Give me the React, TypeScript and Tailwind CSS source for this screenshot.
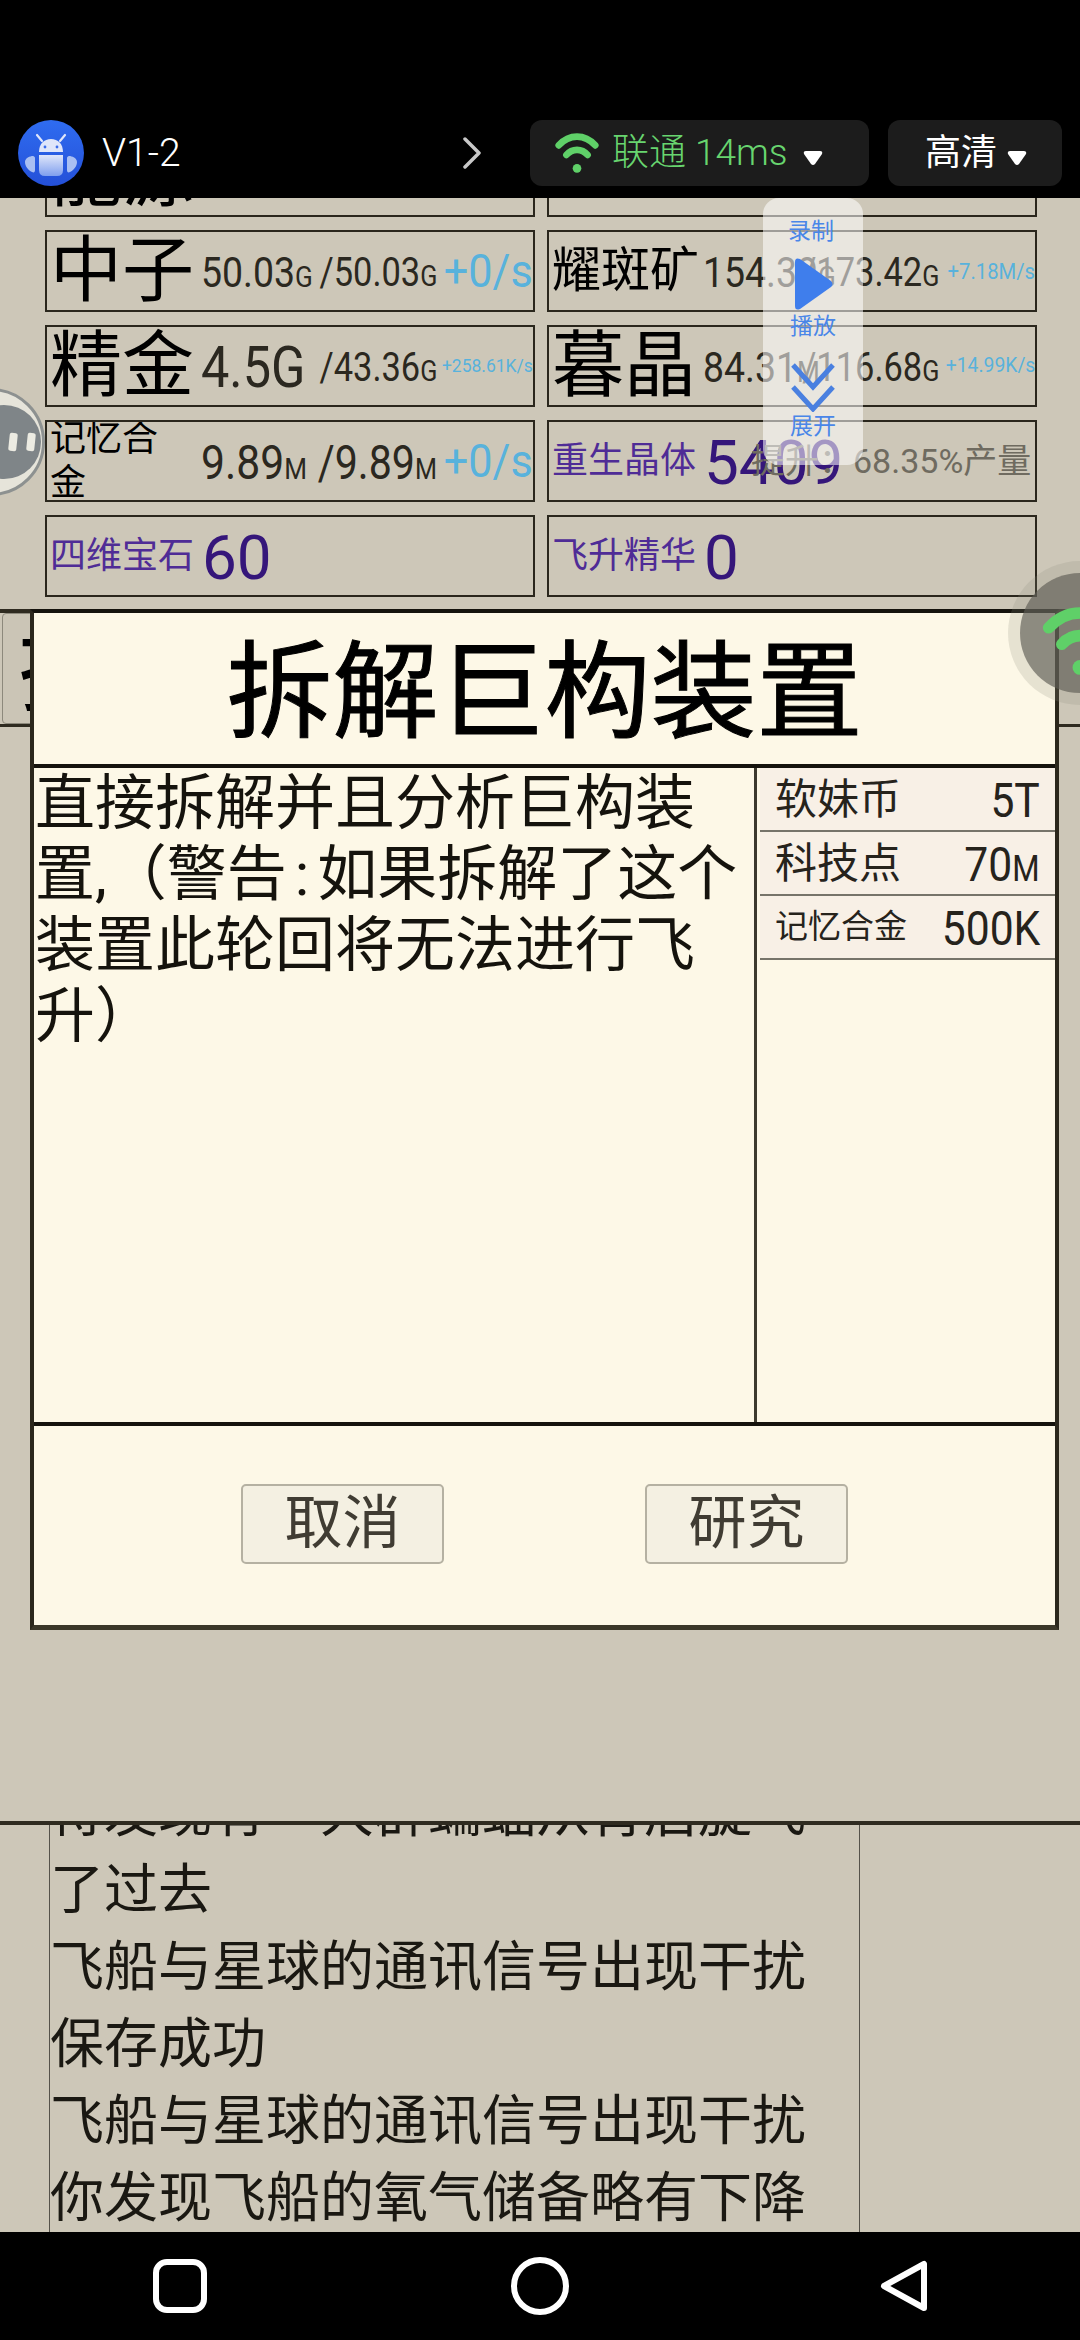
const Sub = ({ children, size = "text-[30px]" }: { children: React.ReactNode; size?: string }) => <span className={size}>{children}</span>;

type RowProps = { name: string; nameClass: string; value: React.ReactNode; valueClass?: string; max: React.ReactNode; rate: string; rateClass: string };

function Res({ name, nameClass, value, valueClass = "text-[43px]", max, rate, rateClass }: RowProps) {
  return (
    <div className="flex h-[82px] items-center overflow-hidden whitespace-nowrap border-2 border-[#2a261c]">
      <div className="w-[154px] shrink-0 pl-[3px]">
        <div className={nameClass}>{name}</div>
      </div>
      <div className="flex w-[117px] shrink-0 justify-start pt-[3px] text-[#2b2820]">
        <span className={`inline-block origin-left scale-x-[.87] ${valueClass}`}>{value}</span>
      </div>
      <div className="flex w-[119px] shrink-0 justify-end pt-[3px] text-[#2b2820]">
        <span className="inline-block origin-right scale-x-[.84] text-[41px]">{max}</span>
      </div>
      <div className="flex min-w-0 flex-1 justify-end text-[#58b2dc]">
        <span className={`inline-block origin-right scale-x-[.92] ${rateClass}`}>{rate}</span>
      </div>
    </div>
  );
}

function Special({ name, value, children }: { name: string; value: string; children?: React.ReactNode }) {
  return (
    <div className="flex h-[82px] items-center overflow-hidden whitespace-nowrap border-2 border-[#2a261c]">
      <div className="w-[155px] shrink-0 pl-[3px] text-[36px] text-[#4f2c96]">{name}</div>
      <div className="w-[94px] shrink-0 pt-[2px] text-[62px] text-[#35167a]">{value}</div>
      {children}
    </div>
  );
}

function Cost({ name, value, nameClass = "text-[42px]" }: { name: string; value: React.ReactNode; nameClass?: string }) {
  return (
    <div className="flex h-[64px] items-center justify-between border-b-2 border-[#77746a] bg-[#f8f0e6] pl-[15px] pr-[15px] text-[#26231c]">
      <span className={nameClass}>{name}</span>
      <span className="inline-block origin-right scale-x-[.87] pt-[3px] text-[49px]">{value}</span>
    </div>
  );
}

function Android() {
  return (
    <svg viewBox="0 0 66 66" className="h-[66px] w-[66px] shrink-0">
      <defs>
        <linearGradient id="a" x1="0" y1="0" x2="0" y2="1">
          <stop offset="0" stopColor="#2f6cf0" />
          <stop offset="1" stopColor="#2450d8" />
        </linearGradient>
        <linearGradient id="b" x1="0" y1="0" x2="0" y2="1">
          <stop offset="0" stopColor="#dfe6fa" />
          <stop offset="1" stopColor="#7f9fee" />
        </linearGradient>
      </defs>
      <circle cx="33" cy="33" r="33" fill="url(#a)" />
      <path d="M21 32c0-8 5-13 12-13s12 5 12 13z" fill="#dfe6fa" />
      <path d="M24 21l-5-6M42 21l5-6" stroke="#dfe6fa" strokeWidth="2.2" strokeLinecap="round" />
      <circle cx="27" cy="27" r="1.4" fill="#3a6cea" />
      <circle cx="39" cy="27" r="1.4" fill="#3a6cea" />
      <path d="M21 35h24v15q0 6-6 6H27q-6 0-6-6z" fill="url(#b)" />
      <path d="M7 42c0-4 5-6 8-6 1 0 2 1 2 2v12c0 2-1 3-3 2-4-2-7-6-7-10zM59 42c0-4-5-6-8-6-1 0-2 1-2 2v12c0 2 1 3 3 2 4-2 7-6 7-10z" fill="#a9bff2" />
    </svg>
  );
}

function Wifi({ className }: { className: string }) {
  return (
    <svg viewBox="0 0 46 50" className={className} fill="none" stroke="#5fd068" strokeWidth="7" strokeLinecap="round">
      <path d="M4 17C15 5 31 5 42 17" />
      <path d="M12 27C18 20 28 20 34 27" />
      <circle cx="23" cy="41" r="4.5" fill="#5fd068" stroke="none" />
    </svg>
  );
}

const Caret = () => (
  <svg viewBox="0 0 20 16" className="mt-[10px] h-[16px] w-[20px] shrink-0">
    <path d="M3 1h14q3 0 2 3l-7 10q-2 2-4 0L1 4Q0 1 3 1z" fill="#fff" />
  </svg>
);

const BASE = "[font-family:Roboto,'Noto_Sans_CJK_SC',sans-serif]";

export default function App() {
  return (
    <div lang="zh-CN" className={`relative flex h-[2340px] w-[1080px] flex-col overflow-hidden bg-[#cdc7b8] text-black ${BASE}`}>
      {/* top bar */}
      <header className="flex h-[198px] shrink-0 flex-col justify-end bg-black pb-[12px] pl-[18px] pr-[18px]">
        <div className="flex h-[66px] items-center">
          <Android />
          <span className="ml-[18px] inline-block w-[363px] text-[39px] font-light text-white">V1-2</span>
          <svg viewBox="0 0 18 32" className="h-[32px] w-[18px] shrink-0" fill="none" stroke="#c8c8c8" strokeWidth="3.5" strokeLinecap="round" strokeLinejoin="round">
            <path d="M2 2l14 14L2 30" />
          </svg>
          <div className="ml-[49px] flex h-[66px] w-[339px] shrink-0 items-center rounded-[12px] bg-[#1c1c1c] pl-[24px]">
            <Wifi className="h-[48px] w-[46px] shrink-0" />
            <span className="ml-[12px] w-[191px] text-[37px] font-light text-[#68d56f]">联通 14ms</span>
            <Caret />
          </div>
          <div className="ml-[19px] flex h-[66px] w-[174px] shrink-0 items-center rounded-[12px] bg-[#1c1c1c] pl-[37px]">
            <span className="w-[82px] text-[36px] text-white">高清</span>
            <Caret />
          </div>
        </div>
      </header>

      {/* resources */}
      <section className="h-[411px] shrink-0 overflow-hidden">
        <div className="ml-[45px] -mt-[63px] grid w-[992px] grid-cols-2 gap-x-[12px] gap-y-[13px]">
          <Res name="能源" nameClass="text-[72px]" value="" max="" rate="" rateClass="" />
          <div className="h-[82px] border-2 border-[#2a261c]" />
          <Res name="中子" nameClass="text-[72px] leading-none" value={<>50.03<Sub>G</Sub></>} max={<>/50.03<Sub>G</Sub></>} rate="+0/s" rateClass="text-[47px]" />
          <Res name="耀斑矿" nameClass="text-[49px]" value={<>154.39<Sub>G</Sub></>} max={<>/173.42<Sub>G</Sub></>} rate="+7.18M/s" rateClass="text-[22px]" />
          <Res name="精金" nameClass="text-[72px] leading-none" value="4.5G" valueClass="text-[58px]" max={<>/43.36<Sub>G</Sub></>} rate="+258.61K/s" rateClass="text-[19px]" />
          <Res name="暮晶" nameClass="text-[72px] leading-none" value={<>84.31<Sub>M</Sub></>} max={<>/116.68<Sub>G</Sub></>} rate="+14.99K/s" rateClass="text-[21px]" />
          <Res name="记忆合金" nameClass="w-[112px] whitespace-normal text-[36px] leading-[44px]" value={<>9.89<Sub>M</Sub></>} valueClass="text-[49px]" max={<span className="text-[49px]">/9.89<Sub>M</Sub></span>} rate="+0/s" rateClass="text-[47px]" />
          <Special name="重生晶体" value="5409">
            <span className="-ml-[47px] text-[34px] text-[#6f6b60]">提升：68.35%产量</span>
          </Special>
          <Special name="四维宝石" value="60" />
          <Special name="飞升精华" value="0" />
        </div>
      </section>

      {/* panel behind the dialog */}
      <section className="relative h-[1216px] shrink-0 border-y-4 border-[#2f2b20] bg-[#cdc7b8]">
        <div className="flex h-[114px] justify-between border-b-[3px] border-[#2f2b20]">
          <div className="ml-[2px] flex h-full w-[60px] items-center overflow-hidden rounded-[4px] border border-[#8d897c] bg-[#cbc5b6] text-[100px] leading-none">
            <span className="ml-[15px]">拆</span>
          </div>
        </div>

        {/* dialog */}
        <div className="absolute -top-[4px] left-[30px] flex h-[1021px] w-[1029px] flex-col border-x-4 border-b-[5px] border-t-4 border-x-[#2b271c] border-b-[#3b3729] border-t-[#15130d] bg-[#fdf8e7]">
          <h1 className="flex h-[151px] shrink-0 items-center justify-center pt-[8px] text-[106px] font-normal leading-none [-webkit-text-stroke:1px_black]">拆解巨构装置</h1>
          <div className="flex h-[662px] shrink-0 border-y-4 border-y-[#15130d]">
            <div className="w-[720px] shrink-0 pl-[1px] pr-[6px] text-[60px] leading-[71px] text-[#15130d]">
              直接拆解并且分析巨构装置,（警告<span className="px-[8px]">:</span>如果拆解了这个装置此轮回将无法进行飞升）
            </div>
            <div className="flex-1 border-l-[3px] border-[#3d3a2e]">
              <div className="ml-[3px]">
                <Cost name="软妹币" value="5T" />
                <Cost name="科技点" value={<>70<span className="text-[36px]">M</span></>} />
                <Cost name="记忆合金" nameClass="text-[33px]" value="500K" />
              </div>
            </div>
          </div>
          <div className="flex flex-1 items-center justify-center gap-[201px] pb-[4px]">
            <button className="flex h-[80px] w-[203px] items-center justify-center rounded-[5px] border-2 border-[#b5b1a2] bg-[#f4f0e2] text-[58px] text-[#403c33]">取消</button>
            <button className="flex h-[80px] w-[203px] items-center justify-center rounded-[5px] border-2 border-[#b5b1a2] bg-[#f4f0e2] text-[58px] text-[#403c33]">研究</button>
          </div>
        </div>
      </section>

      {/* log */}
      <section className="min-h-0 flex-1 overflow-hidden">
        <div className="ml-[49px] -mt-[50px] w-[811px] border-x border-[#55524a] text-[54px] leading-[77px] text-[#1a1812]">
          <div>待发现有一大群蝙蝠从背后旋飞</div>
          <div>了过去</div>
          <div>飞船与星球的通讯信号出现干扰</div>
          <div>保存成功</div>
          <div>飞船与星球的通讯信号出现干扰</div>
          <div>你发现飞船的氧气储备略有下降</div>
          <div className="h-[40px]" />
        </div>
      </section>

      {/* nav */}
      <nav className="flex h-[108px] shrink-0 items-center bg-black pl-[153px]">
        <div className="h-[54px] w-[54px] rounded-[14px] border-[6px] border-white" />
        <div className="ml-[304px] h-[58px] w-[58px] rounded-full border-[6px] border-white" />
        <svg viewBox="0 0 48 52" className="ml-[311px] h-[52px] w-[48px]" fill="none" stroke="#fff" strokeWidth="6" strokeLinejoin="round">
          <path d="M44 4v44L4 26z" />
        </svg>
      </nav>

      {/* floating recorder */}
      <div className="absolute left-[763px] top-[198px] flex h-[267px] w-[100px] flex-col items-center rounded-[16px] bg-white/55 text-[23px] leading-[30px] text-[#4a86e8]">
        <span className="-ml-[4px] mt-[19px]">录制</span>
        <svg viewBox="0 0 42 54" className="mt-[10px] h-[54px] w-[42px]"><path d="M3 5v44q0 5 5 3l31-22q3-3 0-6L8 2Q3 0 3 5z" fill="#3f7eec" /></svg>
        <span className="mt-[1px]">播放</span>
        <svg viewBox="0 0 50 50" className="mt-[20px] h-[50px] w-[50px]" fill="none" stroke="#4a80e0" strokeWidth="5">
          <path d="M5 3l20 22L45 3M5 25l20 22 20-22" />
        </svg>
        <span className="mt-[0px]">展开</span>
      </div>

      {/* floating left bubble */}
      <div className="absolute -left-[63px] top-[388px] flex h-[108px] w-[108px] items-center justify-end rounded-full border-[3px] border-[#8d9190] bg-[#e6e4da] pr-[1px]">
        <div className="flex h-[74px] w-[74px] items-center justify-end gap-[10px] rounded-full bg-[#7f8588] pr-[6px]">
          <div className="h-[18px] w-[8px] rotate-6 rounded-[2px] bg-[#ecebe2]" />
          <div className="h-[18px] w-[8px] rotate-6 rounded-[2px] bg-[#ecebe2]" />
        </div>
      </div>

      {/* floating right bubble */}
      <div className="absolute left-[1008px] top-[561px] flex h-[144px] w-[144px] items-center justify-center rounded-full bg-[#8d8a7c]/20">
        <div className="relative h-[120px] w-[120px] rounded-full bg-[#5e5c54]/65">
          <Wifi className="absolute left-[22px] top-[26px] h-[84px] w-[76px]" />
        </div>
      </div>
    </div>
  );
}
